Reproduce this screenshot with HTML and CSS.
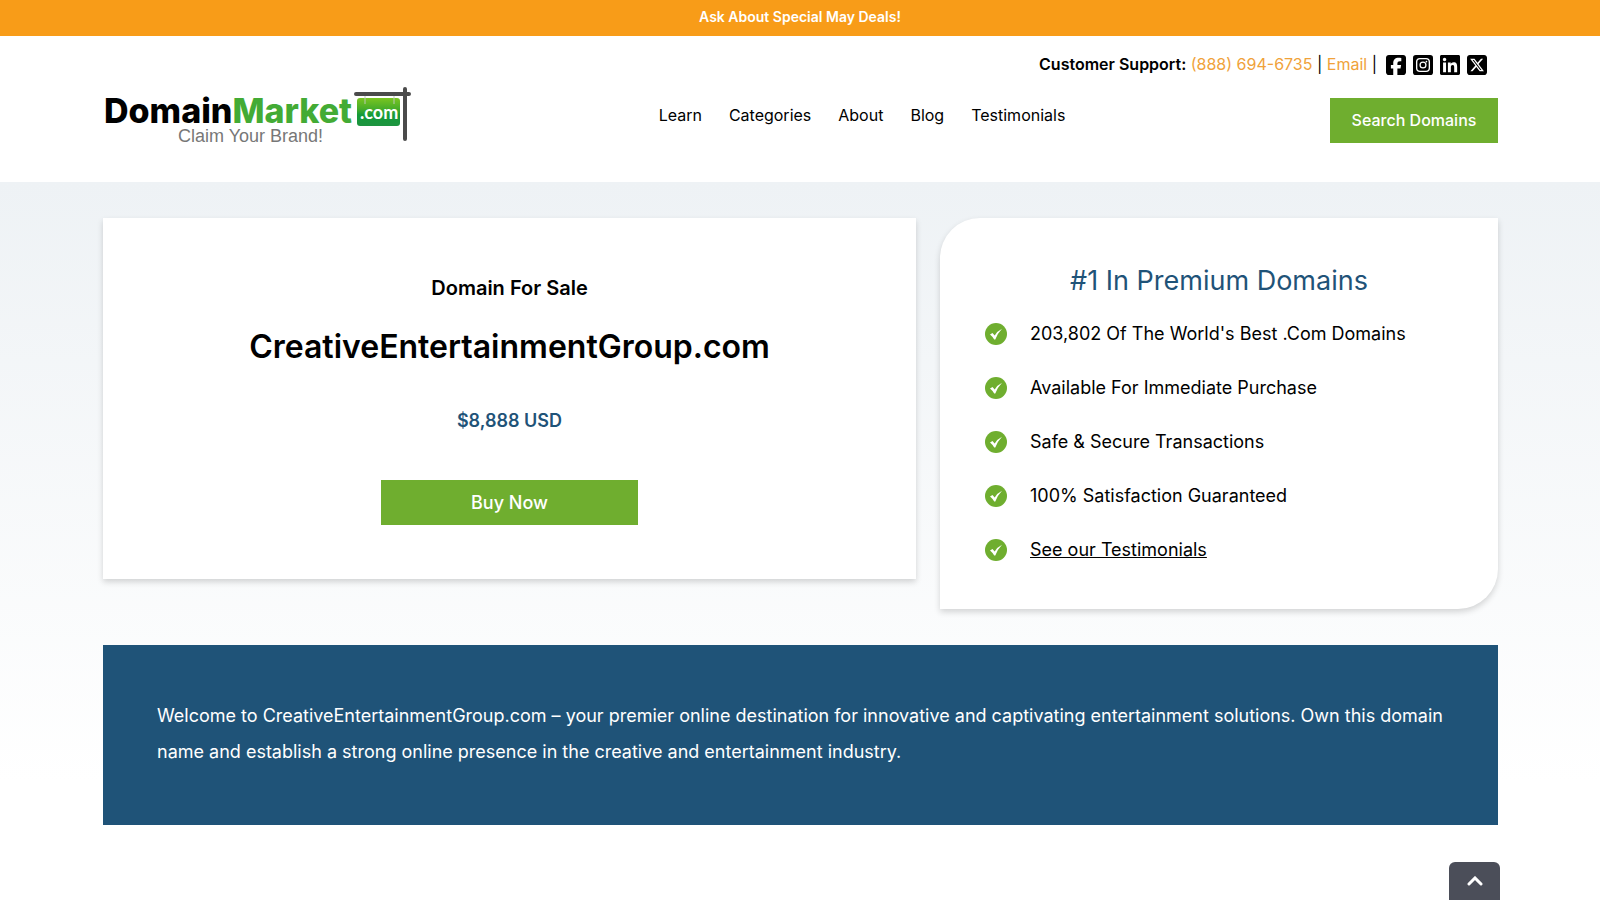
FILE: index.html
```html
<!DOCTYPE html>
<html lang="en">
<head>
    <meta charset="UTF-8">
    <meta name="viewport" content="width=device-width, initial-scale=1.0">
    <title>CreativeEntertainmentGroup.com | DomainMarket.com</title>
    <link rel="stylesheet" href="styles.css">
</head>
<body>
    <div class="top-bar">Ask About Special May Deals!</div>

    <header class="header">
        <a href="#" class="logo" aria-label="DomainMarket.com">
            <svg viewBox="0 0 310 64" width="310" height="64">
                <defs>
                    <linearGradient id="sign" x1="0" y1="0" x2="0" y2="1">
                        <stop offset="0" stop-color="#7ac520"/>
                        <stop offset="0.4" stop-color="#45ac2a"/>
                        <stop offset="0.6" stop-color="#149a38"/>
                        <stop offset="1" stop-color="#1d9440"/>
                    </linearGradient>
                </defs>
                <text x="1" y="37" class="logo-name">Domain<tspan class="logo-green">Market</tspan></text>
                <text x="75" y="56" class="logo-tagline">Claim Your Brand!</text>
                <rect x="254" y="12" width="43" height="28" rx="3" fill="url(#sign)"/>
                <path d="M262 10v8M291 10v8" stroke="#b9c8b5" stroke-width="1"/>
                <text x="257" y="33" class="logo-com">.com</text>
                <path d="M253 8h53M302 3v50" stroke="#4b4b4b" stroke-width="4" stroke-linecap="round"/>
            </svg>
        </a>

        <div class="header-main">
            <div class="support">
                <p><strong>Customer Support:</strong> <a href="#">(888) 694-6735</a> | <a href="#">Email</a> |</p>
                <div class="social">
                    <a href="#" aria-label="Facebook">
                        <svg viewBox="0 32 448 448"><path d="M64 32C28.700 32 0 60.700 0 96V416c0 35.300 28.700 64 64 64h98.200V334.200H109.400V256h52.800V222.300c0-87.100 39.400-127.500 125-127.500c16.200 0 44.200 3.200 55.700 6.400V172c-6-.6-16.500-1-29.600-1c-42 0-58.200 15.900-58.200 57.200V256h83.600l-14.400 78.200H255V480H384c35.300 0 64-28.700 64-64V96c0-35.300-28.700-64-64-64H64z"/></svg>
                    </a>
                    <a href="#" aria-label="Instagram">
                        <svg viewBox="0 32 448 448">
                            <rect y="32" width="448" height="448" rx="64"/>
                            <rect x="82" y="114" width="284" height="284" rx="74" fill="none" stroke="#fff" stroke-width="30"/>
                            <circle cx="224" cy="256" r="66" fill="none" stroke="#fff" stroke-width="28"/>
                            <circle cx="301" cy="180" r="19" fill="#fff"/>
                        </svg>
                    </a>
                    <a href="#" aria-label="LinkedIn">
                        <svg viewBox="0 32 448 448"><path d="M416 32H31.900C14.300 32 0 46.500 0 64.300v383.400C0 465.500 14.300 480 31.900 480H416c17.600 0 32-14.500 32-32.300V64.300c0-17.800-14.400-32.300-32-32.300zM135.400 416H69V202.200h66.500V416zm-33.200-243c-21.300 0-38.500-17.300-38.500-38.500S80.900 96 102.200 96c21.200 0 38.500 17.300 38.500 38.500 0 21.300-17.200 38.500-38.500 38.500zm282.100 243h-66.400V312c0-24.800-.5-56.700-34.500-56.700-34.600 0-39.900 27-39.900 54.900V416h-66.400V202.200h63.700v29.200h.9c8.900-16.800 30.600-34.500 62.900-34.500 67.200 0 79.700 44.300 79.700 101.900V416z"/></svg>
                    </a>
                    <a href="#" aria-label="X">
                        <svg viewBox="0 32 448 448"><path d="M64 32C28.700 32 0 60.700 0 96V416c0 35.300 28.700 64 64 64H384c35.300 0 64-28.700 64-64V96c0-35.300-28.700-64-64-64H64zm297.100 84L257.300 234.600 379.400 396H283.800L209 298.100 123.300 396H75.800l111-126.900L69.700 116h98l67.700 89.500L313.600 116h47.500zM323.300 367.600L153.400 142.900H125.100L296.900 367.600h26.300z"/></svg>
                    </a>
                </div>
            </div>
            <div class="nav-row">
                <nav class="nav">
                    <a href="#">Learn</a>
                    <a href="#">Categories</a>
                    <a href="#">About</a>
                    <a href="#">Blog</a>
                    <a href="#">Testimonials</a>
                </nav>
                <a href="#" class="btn btn-search">Search Domains</a>
            </div>
        </div>
    </header>

    <main class="content">
        <div class="cards">
            <section class="card sale">
                <h2>Domain For Sale</h2>
                <h1>CreativeEntertainmentGroup.com</h1>
                <p class="price">$8,888 USD</p>
                <button type="button" class="btn btn-buy">Buy Now</button>
            </section>

            <section class="card premium">
                <h2>#1 In Premium Domains</h2>
                <ul>
                    <li><svg class="check" viewBox="0 0 22 22"><circle cx="11" cy="11" r="11"/><path d="M5 11.500L7.500 10l2.200 2.400Q12.500 8 17 5.800Q12.500 10.500 10.300 16.500H9.200Q7.500 13.500 5 11.500z"/></svg>203,802 Of The World's Best .Com Domains</li>
                    <li><svg class="check" viewBox="0 0 22 22"><circle cx="11" cy="11" r="11"/><path d="M5 11.500L7.500 10l2.200 2.400Q12.500 8 17 5.800Q12.500 10.500 10.300 16.500H9.200Q7.500 13.500 5 11.500z"/></svg>Available For Immediate Purchase</li>
                    <li><svg class="check" viewBox="0 0 22 22"><circle cx="11" cy="11" r="11"/><path d="M5 11.500L7.500 10l2.200 2.400Q12.500 8 17 5.800Q12.500 10.500 10.300 16.500H9.200Q7.500 13.500 5 11.500z"/></svg>Safe &amp; Secure Transactions</li>
                    <li><svg class="check" viewBox="0 0 22 22"><circle cx="11" cy="11" r="11"/><path d="M5 11.500L7.500 10l2.200 2.400Q12.500 8 17 5.800Q12.500 10.500 10.300 16.500H9.200Q7.500 13.500 5 11.500z"/></svg>100% Satisfaction Guaranteed</li>
                    <li><svg class="check" viewBox="0 0 22 22"><circle cx="11" cy="11" r="11"/><path d="M5 11.500L7.500 10l2.200 2.400Q12.500 8 17 5.800Q12.500 10.500 10.300 16.500H9.200Q7.500 13.500 5 11.500z"/></svg><a href="#">See our Testimonials</a></li>
                </ul>
            </section>
        </div>

        <section class="welcome">
            <p>Welcome to CreativeEntertainmentGroup.com – your premier online destination for innovative and captivating entertainment solutions. Own this domain name and establish a strong online presence in the creative and entertainment industry.</p>
        </section>
    </main>

    <button type="button" class="scroll-top" aria-label="Scroll to top">
        <svg viewBox="0 0 16 10" width="16" height="10"><path d="M2 8l6-6 6 6" fill="none" stroke="#fff" stroke-width="3" stroke-linecap="round"/></svg>
    </button>

    <script>
        document.querySelector('.scroll-top').addEventListener('click', function() {
            window.scrollTo({ top: 0, behavior: 'smooth' });
        });
    </script>
</body>
</html>
```

FILE: styles.css
```css
:root {
    --green: #6fae2f;
    --orange: #f89c18;
    --blue: #1f5378;
}

* {
    margin: 0;
    padding: 0;
    box-sizing: border-box;
}

body {
    font-family: Inter, "Liberation Sans", sans-serif;
    font-size: 16px;
    line-height: 24px;
    color: #000;
    background: #fff;
}

a {
    color: inherit;
    text-decoration: none;
}

.top-bar {
    background: var(--orange);
    color: #fff;
    font-size: 14px;
    font-weight: 600;
    line-height: 34px;
    padding-bottom: 2px;
    text-align: center;
}

/* Header */
.header {
    display: flex;
    padding: 16px 102px 32px 103px;
}

.logo {
    margin-top: 34px;
}

.logo svg {
    display: block;
}

.logo-name {
    font-family: Inter, sans-serif;
    font-size: 34px;
    font-weight: 800;
    fill: #000;
}

.logo-name .logo-green {
    fill: #43ab35;
}

.logo-tagline {
    font-family: "Liberation Sans", Arial, sans-serif;
    font-size: 18px;
    fill: #777;
}

.logo-com {
    font-family: Lato, sans-serif;
    font-size: 18px;
    font-weight: 700;
    fill: #fff;
}

.header-main {
    flex: 1;
}

.support {
    display: flex;
    justify-content: flex-end;
    align-items: flex-end;
    gap: 9px;
    padding-right: 11px;
}

.support strong {
    font-weight: 600;
}

.support p a {
    color: #f0a23a;
}

.social {
    display: flex;
    gap: 7px;
    padding-bottom: 1px;
}

.social svg {
    display: block;
    width: 20px;
    height: 20px;
}

.nav-row {
    display: flex;
    align-items: flex-start;
    justify-content: flex-end;
    margin-top: 22px;
}

.nav {
    display: flex;
    flex: 1;
    justify-content: center;
    gap: 27px;
    padding: 5px 19px 0 0;
}

.btn {
    display: block;
    border: none;
    background: var(--green);
    color: #fff;
    font-family: inherit;
    font-weight: 500;
    line-height: 45px;
    text-align: center;
    cursor: pointer;
}

.btn:hover {
    background: #5f9927;
}

.btn-search {
    width: 168px;
    font-size: 16px;
}

/* Content */
.content {
    padding: 36px 102px 75px 103px;
    background: linear-gradient(#eef2f5, #fff 600px);
}

.cards {
    display: grid;
    grid-template-columns: 813fr 558fr;
    gap: 24px;
    align-items: start;
}

.card {
    background: #fff;
    box-shadow: 0 3px 6px rgba(0, 0, 0, 0.16);
}

.sale {
    display: flex;
    flex-direction: column;
    align-items: center;
    padding: 54px;
}

.sale h2 {
    font-size: 20px;
    font-weight: 600;
    line-height: 32px;
}

.sale h1 {
    margin-top: 19px;
    font-size: 32px;
    font-weight: 600;
    line-height: 48px;
}

.price {
    margin: 32px 0 41px;
    font-size: 18px;
    font-weight: 600;
    line-height: 36px;
    color: var(--blue);
}

.btn-buy {
    width: 257px;
    font-size: 18px;
}

.premium {
    padding: 45px 45px 41px;
    border-radius: 40px 0 40px 0;
}

.premium h2 {
    font-size: 27px;
    font-weight: 400;
    line-height: 36px;
    text-align: center;
    color: var(--blue);
}

.premium ul {
    display: grid;
    gap: 18px;
    margin-top: 17px;
    list-style: none;
}

.premium li {
    display: flex;
    align-items: center;
    gap: 23px;
    font-size: 18px;
    line-height: 36px;
}

.premium li a {
    text-decoration: underline;
}

.check {
    width: 22px;
    height: 22px;
}

.check circle {
    fill: var(--green);
}

.check path {
    fill: #fff;
}

.welcome {
    margin-top: 36px;
    padding: 53px 54px 55px;
    background: var(--blue);
    color: #fff;
    font-size: 18px;
    line-height: 36px;
}

.scroll-top {
    position: fixed;
    right: 100px;
    bottom: 0;
    width: 51px;
    height: 38px;
    border: none;
    border-radius: 6px 6px 0 0;
    background: #4b4e59;
    cursor: pointer;
}
```
